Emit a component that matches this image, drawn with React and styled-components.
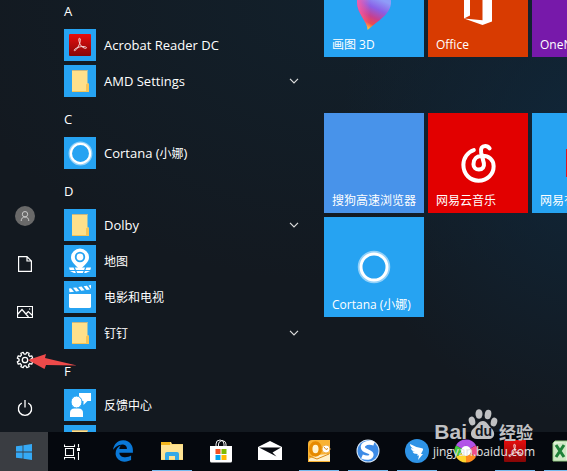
import styled, { createGlobalStyle, css } from 'styled-components';
import { FaEdgeLegacy } from 'react-icons/fa6';

const GlobalStyle = createGlobalStyle`
  * { box-sizing: border-box; }
  body {
    margin: 0;
    background: #131920;
    color: #fff;
    font-family: "Open Sans", "Noto Sans CJK SC", sans-serif;
    font-size: 12px;
    overflow: hidden;
  }
  button {
    border: 0;
    padding: 0;
    background: none;
    color: inherit;
    font: inherit;
    text-align: left;
  }
  svg { display: block; flex: none; }
`;

/* ---------- icons ---------- */

const AcrobatMark = ({ size }) => (
  <svg width={size} height={size} viewBox="0 0 22 22">
    <defs>
      <linearGradient id="acro" x1="0" y1="0" x2="0" y2="1">
        <stop offset="0" stopColor="#e80d0d" />
        <stop offset="1" stopColor="#860606" />
      </linearGradient>
    </defs>
    <rect width="22" height="22" rx="1" fill="url(#acro)" />
    <path d="M10.400 4.200c1.500 0 1 3.800-.3 6.600-1.300 3-3.500 6-4.700 5.800-1.400-.5 2-3.200 6.300-3.900 3.200-.5 6 .1 5.800 1.200-.3 1.100-3.400.2-5.300-2C10 9.500 9.200 4.300 10.400 4.200z" fill="none" stroke="#f6d5d5" strokeWidth="1" />
  </svg>
);

const Folder = () => (
  <svg width="32" height="32" viewBox="0 0 32 32">
    <path d="M8 5h15.500v13l1.500 1v7.500H8z" fill="#ffe08a" />
    <path d="M8 5h15.500v1H8z" fill="#c9b780" />
    <path d="M8 26h17v1H8zM23.500 18l1.500 1v7.500h-3v-7z" fill="#f6c457" />
  </svg>
);

const Ring = ({ size }) => (
  <svg width={size} height={size} viewBox="0 0 34 34">
    <circle cx="17" cy="17" r="14.500" fill="none" stroke="#fff" strokeOpacity=".5" strokeWidth="3.500" />
    <circle cx="17" cy="17" r="13" fill="none" stroke="#fff" strokeWidth="3" />
  </svg>
);

const MapPin = () => (
  <svg width="32" height="32" viewBox="0 0 32 32">
    <path d="M5 22.500h22L26 26l-4 2H10l-4-2z" fill="#fff" />
    <path d="M4 25.500h24M10 22l3 7M22 22l-3 7" stroke="#26a3f2" strokeWidth="1.200" />
    <path d="M16 3.500a9 9 0 0 1 9 9c0 5-5 7.500-9 12.500-4-5-9-7.500-9-12.500a9 9 0 0 1 9-9z" fill="#fff" />
    <circle cx="16" cy="12" r="4.300" fill="#fff" stroke="#26a3f2" strokeWidth="1.800" />
  </svg>
);

const Clapper = () => (
  <svg width="32" height="32" viewBox="0 0 32 32" fill="#fff">
    <path d="M5 13h22v12.500q0 1.500-1.500 1.500h-19Q5 27 5 25.500z" />
    <path d="M5 7.500l2-.3 3 3.600-4.500.5zM9 6.800l3.300-.4 3 3.700-3.300.4zM14.300 6l3.300-.5 3 3.800-3.300.4zM19.600 5.200l3.300-.5 3 3.900-3.300.4zM24.500 4.500l2.500-.4v4z" />
  </svg>
);

const Feedback = () => (
  <svg width="32" height="32" viewBox="0 0 32 32" fill="#fff">
    <path d="M15 4h12v8h-3.500L19.500 16v-4H15z" />
    <ellipse cx="12.500" cy="13" rx="5.500" ry="6" stroke="#26a3f2" />
    <path d="M6 28v-4q0-4.500 4.500-4.500h4Q19 19.500 19 24v4z" />
  </svg>
);

const Chevron = () => (
  <svg width="10" height="6" viewBox="0 0 10 6" fill="none" stroke="#ddd" strokeWidth="1.200">
    <path d="M1 .8l4 4 4-4" />
  </svg>
);

const User = () => (
  <svg width="20" height="20" viewBox="0 0 20 20">
    <circle cx="10" cy="10" r="10" fill="#696969" />
    <g fill="none" stroke="#c9c9c9">
      <circle cx="10" cy="8.200" r="2.700" />
      <path d="M6.200 15c0-2.500 1.400-4 3.800-4s3.800 1.500 3.800 4" />
    </g>
  </svg>
);

const Document = () => (
  <svg width="14" height="16" viewBox="0 0 14 16" fill="none" stroke="#fff" strokeWidth="1.200">
    <path d="M.6.600h8.400l4.400 4.400v10.400H.6zM9 .6V5h4.400" />
  </svg>
);

const Picture = () => (
  <svg width="16" height="12" viewBox="0 0 16 12" fill="none" stroke="#fff" strokeWidth="1.200">
    <path d="M.5.500h15v11H.5zM.5 8.500l4.500-5 6.500 7.500M9 8l2.300-2.500L15.500 9.500" />
    <path d="M12 3h1.200" />
  </svg>
);

const gearPath = (teeth, outer, inner) => {
  const step = (Math.PI * 2) / teeth;
  const points = [];
  for (let i = 0; i < teeth; i++) {
    [[-0.3, inner], [-0.2, outer], [0.2, outer], [0.3, inner]].forEach(([shift, r]) => {
      const angle = (i + 0.5 + shift) * step;
      points.push(`${(9 + r * Math.cos(angle)).toFixed(2)} ${(9 + r * Math.sin(angle)).toFixed(2)}`);
    });
  }
  return `M${points.join('L')}Z`;
};

const Gear = () => (
  <svg width="18" height="18" viewBox="0 0 18 18" fill="none" stroke="#fff" strokeWidth="1.300" strokeLinejoin="round">
    <path d={gearPath(8, 7.9, 6)} />
    <circle cx="9" cy="9" r="2.700" />
  </svg>
);

const Power = () => (
  <svg width="16" height="18" viewBox="0 0 16 18" fill="none" stroke="#fff" strokeWidth="1.300">
    <path d="M8 1v7.500M4.800 4a6.600 6.600 0 1 0 6.400 0" />
  </svg>
);

const Arrow = styled.svg`
  position: absolute;
  left: 28px;
  top: 18px;
  z-index: 2;
`;

const Paint3D = () => (
  <svg width="36" height="46" viewBox="0 0 36 46">
    <defs>
      <linearGradient id="drop" x1=".7" y1="0" x2=".35" y2="1">
        <stop offset=".3" stopColor="#8f9cf8" />
        <stop offset=".52" stopColor="#8a5fe6" />
        <stop offset=".72" stopColor="#c93f8c" />
        <stop offset=".86" stopColor="#ee4a4f" />
        <stop offset=".97" stopColor="#ffc629" />
      </linearGradient>
      <linearGradient id="dropSide" x1="0" y1="0" x2="1" y2="0">
        <stop offset="0" stopColor="#ff5fa5" stopOpacity=".9" />
        <stop offset=".4" stopColor="#ff5fa5" stopOpacity="0" />
      </linearGradient>
    </defs>
    <path d="M18 0C28 3 35 9 35 18c0 12-12 18-23.500 28 .5-8-10.500-16-10.500-28C1 9 8 3 18 0z" fill="url(#drop)" />
    <path d="M18 0C28 3 35 9 35 18c0 12-12 18-23.500 28 .5-8-10.500-16-10.500-28C1 9 8 3 18 0z" fill="url(#dropSide)" />
  </svg>
);

const OfficeMark = () => (
  <svg width="30" height="36" viewBox="0 0 30 36" fill="#fff">
    <path d="M1 7.500L19.500 0 29 3v29.500L19.500 36 1 29.500l18.500 1.800V6L7 9v17.500l-6 3z" />
  </svg>
);

const NetEaseMark = () => (
  <svg width="35" height="39" viewBox="0 0 104 116" fill="none" stroke="#fff" strokeWidth="12" strokeLinecap="round">
    <path d="M38 18C20 24 7 41 7 62C7 90 27 109 52 109C78 109 97 90 97 66C97 47 82 35 64 35C46 35 37 46 37 60C37 69 44 76 53 76C64 76 70 68 68 57L60 26C57 13 63 6 72 6Q80 6 85 13" />
  </svg>
);

const WindowsLogo = () => (
  <svg width="16" height="16" viewBox="0 0 16 16" fill="#35a9f5">
    <path d="M0 2.300L6.600 1.400v6.200H0zM7.400 1.300L16 0v7.600H7.400zM0 8.400h6.600v6.200L0 13.700zM7.400 8.400H16V16l-8.600-1.300z" />
  </svg>
);

const TaskView = () => (
  <svg width="16" height="16" viewBox="0 0 16 16" fill="none" stroke="#fff" strokeWidth="1.100">
    <path d="M1.500 4.500h8v7h-8zM.5.500V2.500h10V.5M.5 15.500v-2h10v2M14.500 0v3.500M14.500 8v8" />
    <path d="M13 4h3v3h-3z" fill="#fff" stroke="none" />
  </svg>
);

const Explorer = () => (
  <svg width="24" height="24" viewBox="0 0 24 24">
    <path d="M1 3h10l1 2h11v16H1z" fill="#fbd978" />
    <path d="M1 3h9v3H1z" fill="#f3b51b" />
    <path d="M1 6h22v14H1z" fill="#ffe394" />
    <path d="M5 21v-6q0-2 2-2h10q2 0 2 2v6h-4v-4H9v4z" fill="#34a9e8" />
  </svg>
);

const Store = () => (
  <svg width="24" height="24" viewBox="0 0 24 24">
    <path d="M7 8V5q0-4 4-4t4 4v3M9.500 8V5q0-2.500 3.500-3.500Q17 2 17 5v3" fill="none" stroke="#eee" />
    <path d="M1 7h22v15q0 1.500-1.500 1.500h-19Q1 23.500 1 22z" fill="#fff" />
    <path d="M6.500 10h5v5h-5z" fill="#f25022" />
    <path d="M12.500 10h5v5h-5z" fill="#7fba00" />
    <path d="M6.500 16h5v5h-5z" fill="#00a4ef" />
    <path d="M12.500 16h5v5h-5z" fill="#ffb900" />
  </svg>
);

const Mail = () => (
  <svg width="24" height="24" viewBox="0 0 24 24">
    <path d="M0 8l12-6 12 6v13H0z" fill="#fff" />
    <path d="M1 8.500h22l-8.500 5 4 4z" fill="#080b11" />
  </svg>
);

const Outlook = () => (
  <svg width="24" height="24" viewBox="0 0 24 24">
    <path d="M5 1h18v22H1V5q0-4 4-4z" fill="#f9b233" />
    <path d="M2 20l7-4 14-1v7H2z" fill="#fff0c8" />
    <ellipse cx="8.500" cy="10" rx="4.800" ry="6" fill="#fff3cf" stroke="#e68a00" strokeWidth="3.500" />
    <circle cx="19" cy="10" r="4" fill="#fff" stroke="#efb14c" />
    <path d="M17 8l2 2.500 2-1M2 17l8 3 12-5" fill="none" stroke="#d98a19" />
  </svg>
);

const Sogou = () => (
  <svg width="24" height="24" viewBox="0 0 24 24">
    <circle cx="12" cy="12" r="11.500" fill="#d8e6f5" />
    <circle cx="12" cy="12" r="10.500" fill="#3d8be6" />
    <path d="M18 4.500C9 2 4.500 7 8 10.500c3 2.300 8 2.200 7.500 5.500-.5 3-5 3.500-9.500 1.500" fill="none" stroke="#fff" strokeWidth="4.200" />
  </svg>
);

const DingTalk = () => (
  <svg width="24" height="24" viewBox="0 0 24 24">
    <circle cx="12" cy="12" r="12" fill="#2e93e6" />
    <path d="M5 5q6 3.500 12 4.200 1.500.3 1 1.800L16 15h2l-5 6 1-4.500h-2l.8-1.500Q8 15 7.500 12.500L10 13Q6 11.500 6 9l3 1Q5 8 5 5z" fill="#fff" />
  </svg>
);

const ColorWheel = () => (
  <svg width="24" height="24" viewBox="0 0 24 24" fill="none" strokeWidth="7">
    <path d="M12 4A8 8 0 0 1 19 8" stroke="#b253e8" />
    <path d="M19 8A8 8 0 0 1 19 16" stroke="#ef4f8a" />
    <path d="M19 16A8 8 0 0 1 12 20" stroke="#ff8b1f" />
    <path d="M12 20A8 8 0 0 1 5 16" stroke="#ffd52e" />
    <path d="M5 16A8 8 0 0 1 5 8" stroke="#43c83d" />
    <path d="M5 8A8 8 0 0 1 12 4" stroke="#b253e8" />
    <circle cx="12" cy="12" r="5" fill="#fff" stroke="none" />
  </svg>
);

const Excel = () => (
  <svg width="24" height="24" viewBox="0 0 24 24">
    <path d="M3 2h20v20H1V4z" fill="#e4f2dc" stroke="#8cc47c" />
    <path d="M15 6h8M15 10h8M15 14h8M15 18h8M19 4v17" stroke="#6fb35c" />
    <path d="M2 5l12-2v18H2z" fill="#cfe8c4" />
    <path d="M4 6l8 12M12 6L4 18" stroke="#1f8038" strokeWidth="3" />
  </svg>
);

/* ---------- layout ---------- */

const Desktop = styled.div`
  position: relative;
  display: flex;
  flex-direction: column;
  height: 100vh;
  overflow: hidden;
  background:
    radial-gradient(ellipse 45% 60% at 105% 30%, #10273a, transparent),
    radial-gradient(ellipse 70% 60% at 60% 0%, #12202b, transparent),
    #131920;
`;

const StartMenu = styled.main`
  flex: 1;
  min-height: 0;
  display: flex;
  overflow: hidden;
`;

const Rail = styled.nav`
  flex: none;
  width: 48px;
  display: flex;
  flex-direction: column;
  justify-content: flex-end;
`;

const RailButton = styled.button`
  position: relative;
  height: 48px;
  padding-left: 2px;
  display: flex;
  align-items: center;
  justify-content: center;
`;

const AppList = styled.section`
  flex: none;
  width: 276px;
  padding: 0 25px 0 16px;
  /* scrolled a little way down */
  margin-top: -9px;
`;

const Letter = styled.h2`
  margin: 0;
  height: 36px;
  padding-top: 4px;
  font-size: 13px;
  font-weight: 400;
  line-height: 32px;
`;

const AppRow = styled.button`
  width: 100%;
  height: 36px;
  display: flex;
  align-items: center;
  gap: 8px;
  font-size: 13px;
`;

const AppIcon = styled.span`
  flex: none;
  width: 32px;
  height: 32px;
  display: flex;
  align-items: center;
  justify-content: center;
  background: #26a3f2;
`;

const AppName = styled.span`
  flex: 1;
  white-space: nowrap;
`;

const Han = styled.span`
  font-size: 12px;
`;

const Tiles = styled.section`
  flex: 1;
  min-width: 0;
  display: flex;
  flex-direction: column;
  gap: 56px;
  margin-top: -43px;
`;

const TileGroup = styled.div`
  display: grid;
  grid-template-columns: repeat(3, 100px);
  grid-auto-rows: 100px;
  gap: 4px;
`;

const Tile = styled.button`
  display: grid;
  grid-template-areas: "cell";
  background: ${({ $color }) => $color || '#26a3f2'};

  > svg, > i {
    grid-area: cell;
    place-self: center;
  }
`;

const TileName = styled.span`
  grid-area: cell;
  align-self: end;
  padding: 0 8px 4px;
  line-height: 16px;
  white-space: nowrap;
`;

const RedBook = styled.i`
  width: 32px;
  height: 28px;
  background: #e1141e;
`;

const Taskbar = styled.footer`
  flex: none;
  height: 39px;
  display: flex;
  background: #05080e;
`;

const SystemButton = styled.button`
  flex: none;
  width: 48px;
  display: flex;
  align-items: center;
  justify-content: center;
  background: ${({ $active }) => ($active ? '#3a3d42' : 'none')};
`;

const Pinned = styled.div`
  display: flex;
  gap: 9px;
  padding-left: 7px;
`;

const PinnedButton = styled.button`
  flex: none;
  width: 40px;
  display: flex;
  align-items: center;
  justify-content: center;
  border-bottom: 1px solid transparent;
  ${({ $running }) => $running && css`
    border-bottom-color: #76b9ed;
  `}
`;

const Watermark = styled.div`
  position: absolute;
  right: 32px;
  bottom: 10px;
  display: flex;
  flex-direction: column;
  align-items: flex-end;
  color: #c0c1c3;
`;

const Brand = styled.div`
  display: flex;
  align-items: baseline;
  padding-right: 2px;
  font: 700 21px/22px "Liberation Sans", sans-serif;

  span {
    font: 700 17px/22px "Noto Sans CJK SC", sans-serif;
  }
`;

const Site = styled.div`
  color: #e2e3e4;
  font-size: 12px;
  line-height: 18px;
`;

const apps = [
  { letter: 'A' },
  { name: 'Acrobat Reader DC', icon: <AcrobatMark size={22} /> },
  { name: 'AMD Settings', icon: <Folder />, folder: true },
  { letter: 'C' },
  { name: 'Cortana (', han: '小娜', end: ')', icon: <Ring size={25} /> },
  { letter: 'D' },
  { name: 'Dolby', icon: <Folder />, folder: true },
  { han: '地图', icon: <MapPin /> },
  { han: '电影和电视', icon: <Clapper /> },
  { han: '钉钉', icon: <Folder />, folder: true },
  { letter: 'F' },
  { han: '反馈中心', icon: <Feedback /> },
  { icon: <Folder />, label: 'Folder' },
];

const pinned = [
  { label: 'Edge', icon: <FaEdgeLegacy size={22} color="#0a78d7" /> },
  { label: 'Explorer', icon: <Explorer />, running: true },
  { label: 'Store', icon: <Store /> },
  { label: 'Mail', icon: <Mail /> },
  { label: 'Outlook', icon: <Outlook />, running: true },
  { label: 'Sogou', icon: <Sogou />, running: true },
  { label: 'DingTalk', icon: <DingTalk />, running: true },
  { label: 'Colors', icon: <ColorWheel /> },
  { label: 'Acrobat', icon: <AcrobatMark size={22} />, running: true },
  { label: 'Excel', icon: <Excel />, running: true },
];

const App = () => {
  return (
    <Desktop>
      <GlobalStyle />
      <StartMenu>
        <Rail>
          <RailButton aria-label="Account"><User /></RailButton>
          <RailButton aria-label="Documents"><Document /></RailButton>
          <RailButton aria-label="Pictures"><Picture /></RailButton>
          <RailButton aria-label="Settings">
            <Gear />
            <Arrow width="50" height="16" viewBox="0 0 50 16">
              <path d="M0 6L18 0l-1 4 32 7.500L18 11l-1.500 4z" fill="#ee4a4a" />
            </Arrow>
          </RailButton>
          <RailButton aria-label="Power"><Power /></RailButton>
        </Rail>

        <AppList>
          {apps.map((app, i) => app.letter ? (
            <Letter key={i}>{app.letter}</Letter>
          ) : (
            <AppRow key={i} aria-label={app.label}>
              <AppIcon>{app.icon}</AppIcon>
              <AppName>{app.name}{app.han && <Han>{app.han}</Han>}{app.end}</AppName>
              {app.folder && <Chevron />}
            </AppRow>
          ))}
        </AppList>

        <Tiles>
          <TileGroup>
            <Tile><Paint3D /><TileName>画图 3D</TileName></Tile>
            <Tile $color="#d83b01"><OfficeMark /><TileName>Office</TileName></Tile>
            <Tile $color="#7719aa"><TileName>OneNote</TileName></Tile>
          </TileGroup>
          <TileGroup>
            <Tile $color="#4893ea"><TileName>搜狗高速浏览器</TileName></Tile>
            <Tile $color="#e20000"><NetEaseMark /><TileName>网易云音乐</TileName></Tile>
            <Tile><RedBook /><TileName>网易有道词典</TileName></Tile>
            <Tile><Ring size={34} /><TileName>Cortana (小娜)</TileName></Tile>
          </TileGroup>
        </Tiles>
      </StartMenu>

      <Taskbar>
        <SystemButton $active aria-label="Start"><WindowsLogo /></SystemButton>
        <SystemButton aria-label="Task view"><TaskView /></SystemButton>
        <Pinned>
          {pinned.map(({ label, icon, running }) => (
            <PinnedButton key={label} aria-label={label} $running={running}>{icon}</PinnedButton>
          ))}
        </Pinned>
      </Taskbar>

      <Watermark>
        <Brand>
          Bai
          <svg width="32" height="30" viewBox="0 0 30 30" fill="currentColor">
            <ellipse cx="4" cy="12" rx="3.200" ry="4.500" transform="rotate(-15 4 12)" />
            <ellipse cx="11" cy="5" rx="3.500" ry="4.800" />
            <ellipse cx="20" cy="5.500" rx="3.300" ry="4.800" transform="rotate(10 20 5.500)" />
            <ellipse cx="26" cy="13" rx="3.200" ry="4.500" transform="rotate(15 26 13)" />
            <path d="M15 12c4 0 5 4 8 7 5 4 4 11-2 11H9c-6 0-8-6-4-10 4-3 5-8 10-8z" />
            <text x="7" y="27" fill="#12171f" fontFamily="Liberation Sans" fontWeight="700" fontSize="14">du</text>
          </svg>
          <span>经验</span>
        </Brand>
        <Site>jingyan.baidu.com</Site>
      </Watermark>
    </Desktop>
  );
};

export default App;
